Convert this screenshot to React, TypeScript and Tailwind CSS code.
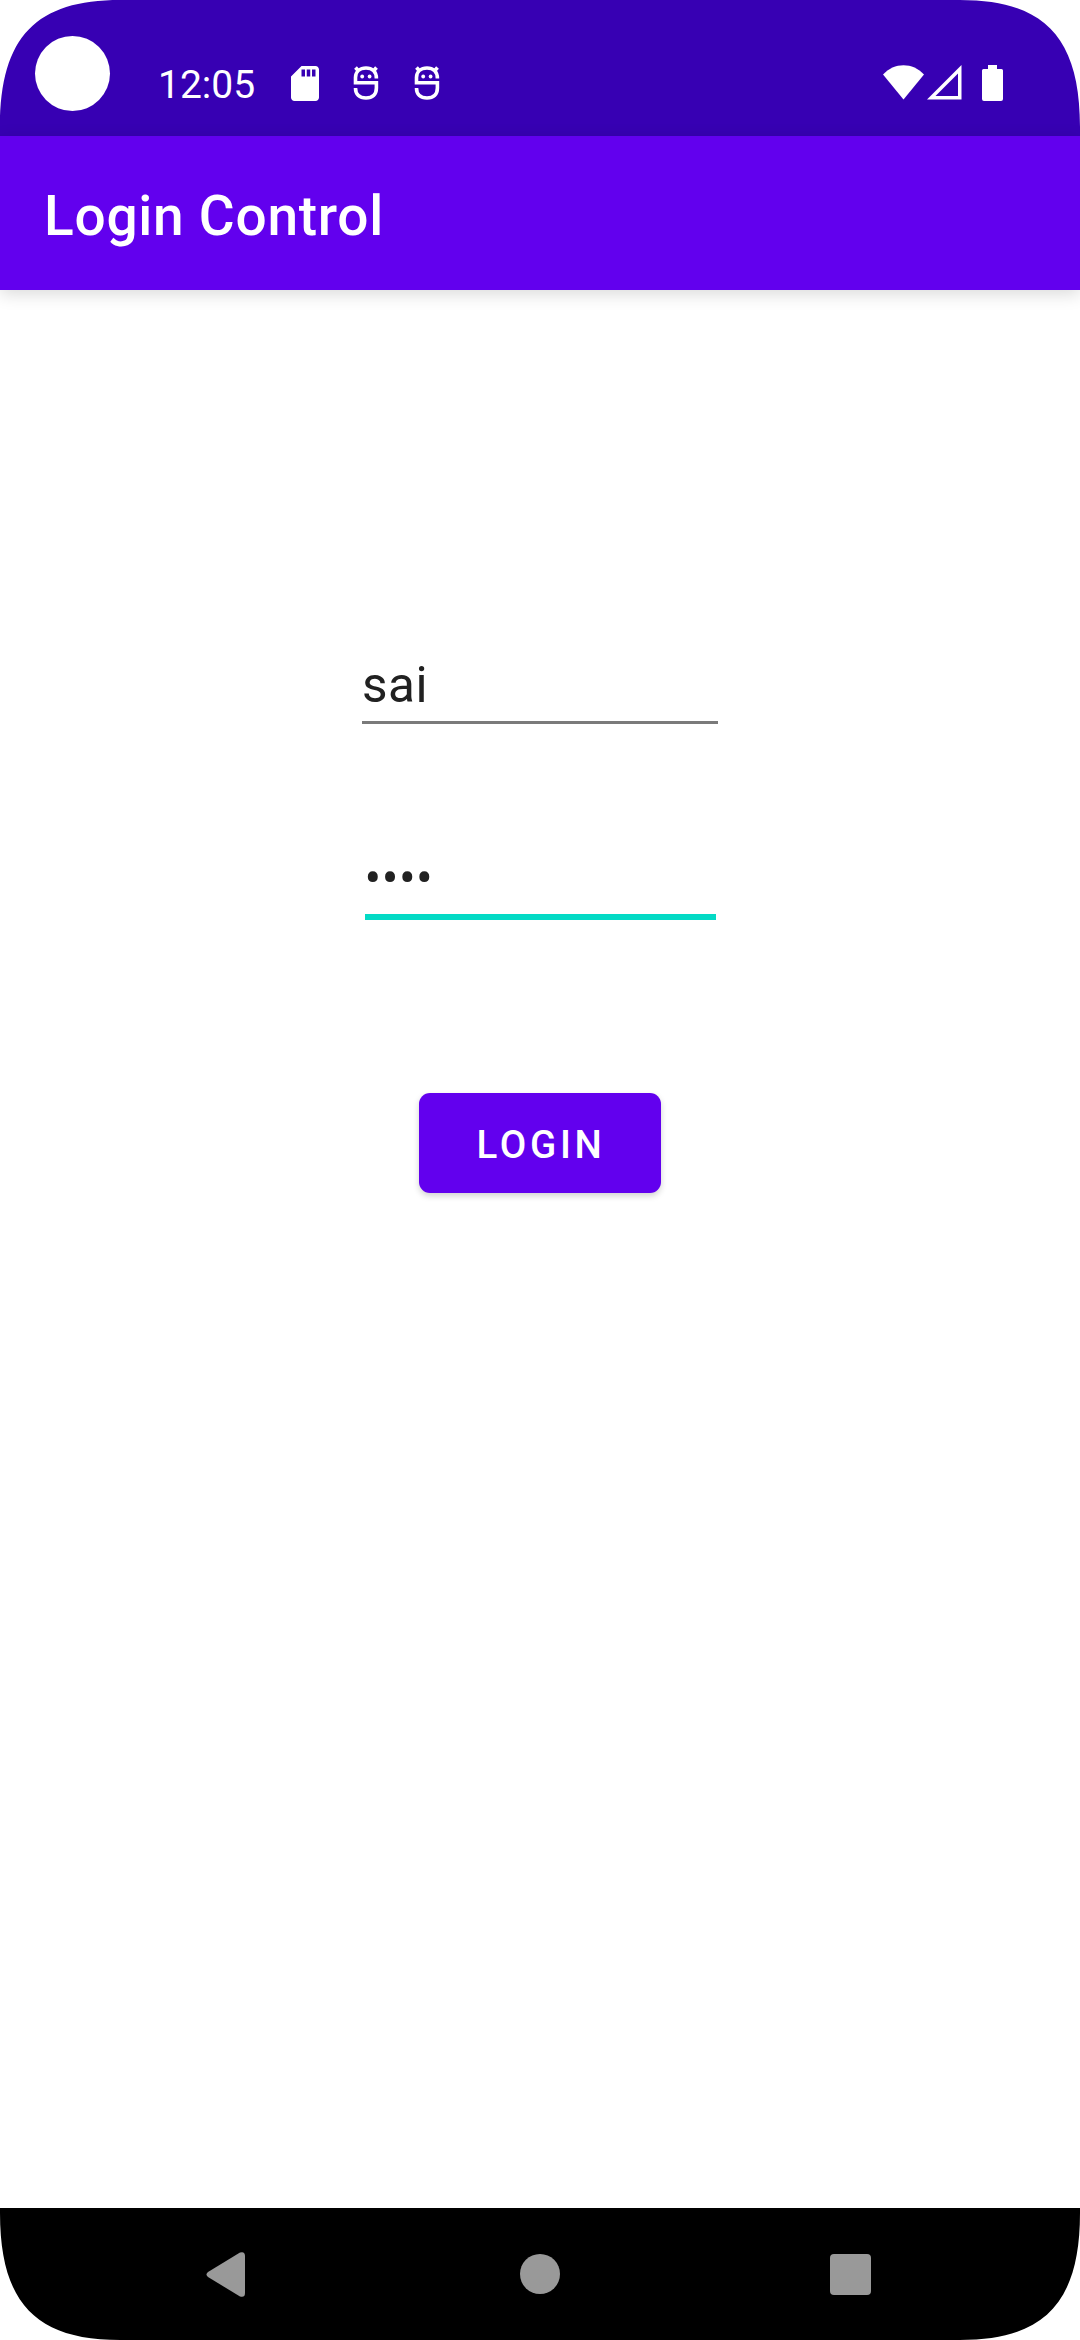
type CornerProps = { className: string };

function Corner({ className }: CornerProps) {
  return (
    <svg className={`absolute h-[127px] w-[120px] ${className}`} viewBox="0 0 120 127" aria-hidden="true">
      <path d="M0 0H120C37 0 0 36 0 127Z" fill="#fff" />
    </svg>
  );
}

function SdCard() {
  return (
    <svg className="ml-[36px] h-[35px] w-[28px]" viewBox="4 2 16 20" preserveAspectRatio="none" aria-hidden="true">
      <path
        fill="#fff"
        d="M18 2h-8L4 8v12c0 1.1.9 2 2 2h12c1.1 0 2-.9 2-2V4c0-1.1-.9-2-2-2zm-6 6h-2V4h2v4zm3 0h-2V4h2v4zm3 0h-2V4h2v4z"
      />
    </svg>
  );
}

function Mascot({ className }: { className: string }) {
  return (
    <svg className={`h-[36px] w-[26px] ${className}`} viewBox="0 0 26 36" fill="none" stroke="#fff" strokeWidth="3.6" aria-hidden="true">
      <path d="M23.4 13.5C23.400 6.500 19 3 13 3S2.500 6.500 2.500 12.500V17.800H23.400V23C23.400 29.500 19.500 33 13 33S2.500 29.500 2.500 23" />
      <path d="M2.500 2.500L5.500 6M23.500 2.500L20.500 6" />
      <circle cx="9.200" cy="11.500" r="1.900" fill="#fff" stroke="none" />
      <circle cx="16.600" cy="11.500" r="1.900" fill="#fff" stroke="none" />
    </svg>
  );
}

function StatusBar() {
  return (
    <header className="flex h-[136px] shrink-0 items-start bg-[#3700b3] text-white">
      <div className="mt-[36px] ml-[35px] size-[75px] rounded-full bg-white" />
      <div className="mt-[60px] ml-[48px] flex h-[46px] items-center">
        <span className="w-[97px] pt-[4px] text-[39px] leading-[46px] whitespace-nowrap">12:05</span>
        <SdCard />
        <Mascot className="ml-[34px]" />
        <Mascot className="ml-[35px]" />
      </div>
      <div className="mt-[65px] mr-[77px] ml-auto flex items-start">
        <svg className="h-[35px] w-[41px]" viewBox="0 0 41 35" aria-hidden="true">
          <path d="M0 9.500C11-3 30-3 41 9.500L20.500 34.500Z" fill="#fff" />
        </svg>
        <svg className="ml-[3px] h-[35px] w-[35px]" viewBox="0 0 35 35" aria-hidden="true">
          <path d="M34.500 0V34.500H0ZM31 8.500L8.500 31H31Z" fill="#fff" fillRule="evenodd" />
        </svg>
        <svg className="ml-[20px] h-[36px] w-[21px]" viewBox="0 0 21 36" aria-hidden="true">
          <path d="M6 0H15V4H19.500Q21 4 21 5.500V34Q21 36 19 36H2Q0 36 0 34V5.500Q0 4 1.500 4H6Z" fill="#fff" />
        </svg>
      </div>
    </header>
  );
}

export default function App() {
  return (
    <div className="relative flex h-[2340px] w-[1080px] flex-col overflow-hidden bg-white font-['Roboto',sans-serif]">
      <StatusBar />
      <div className="z-10 flex h-[154px] shrink-0 items-center bg-[#6200ee] pl-[44px] shadow-[0_4px_16px_rgba(0,0,0,0.15)]">
        <h1 className="pt-[6px] text-[55px] leading-[64px] font-medium tracking-[0.0135em] text-white">Login Control</h1>
      </div>
      <main className="flex flex-1 flex-col items-center">
        <div className="mt-[360px] flex h-[74px] w-[356px] flex-col justify-between border-b-[3px] border-[#7a7a7a]">
          <span className="text-[49.5px] leading-[70px] tracking-[0.01em] text-[#212121]">sai</span>
        </div>
        <div className="mt-[119px] flex h-[77px] w-[351px] flex-col border-b-[6px] border-[#03dac5]">
          <span className="text-[49.5px] leading-[70px] tracking-[0.01em] text-[#212121]">••••</span>
        </div>
        <button className="mt-[173px] h-[100px] w-[242px] rounded-[11px] bg-[#6200ee] pt-[4px] pl-[2px] text-[38.5px] font-medium tracking-[0.096em] text-white shadow-[0_3px_6px_rgba(0,0,0,0.18)]">
          LOGIN
        </button>
      </main>
      <nav className="flex h-[132px] shrink-0 items-start bg-black">
        <svg className="mt-[44px] ml-[206px] h-[45px] w-[39px]" viewBox="0 0 39 45" aria-hidden="true">
          <path d="M34 0.500Q39-1 39 4V41Q39 46 34 44.500L2 25Q-1 22.500 2 20Z" fill="#999" />
        </svg>
        <div className="mt-[46px] ml-[275px] size-[40px] rounded-full bg-[#999]" />
        <div className="mt-[46px] ml-[270px] size-[41px] rounded-[4px] bg-[#999]" />
      </nav>
      <Corner className="top-0 left-0" />
      <Corner className="top-0 right-0 -scale-x-100" />
      <Corner className="bottom-0 left-0 -scale-y-100" />
      <Corner className="right-0 bottom-0 -scale-100" />
    </div>
  );
}
